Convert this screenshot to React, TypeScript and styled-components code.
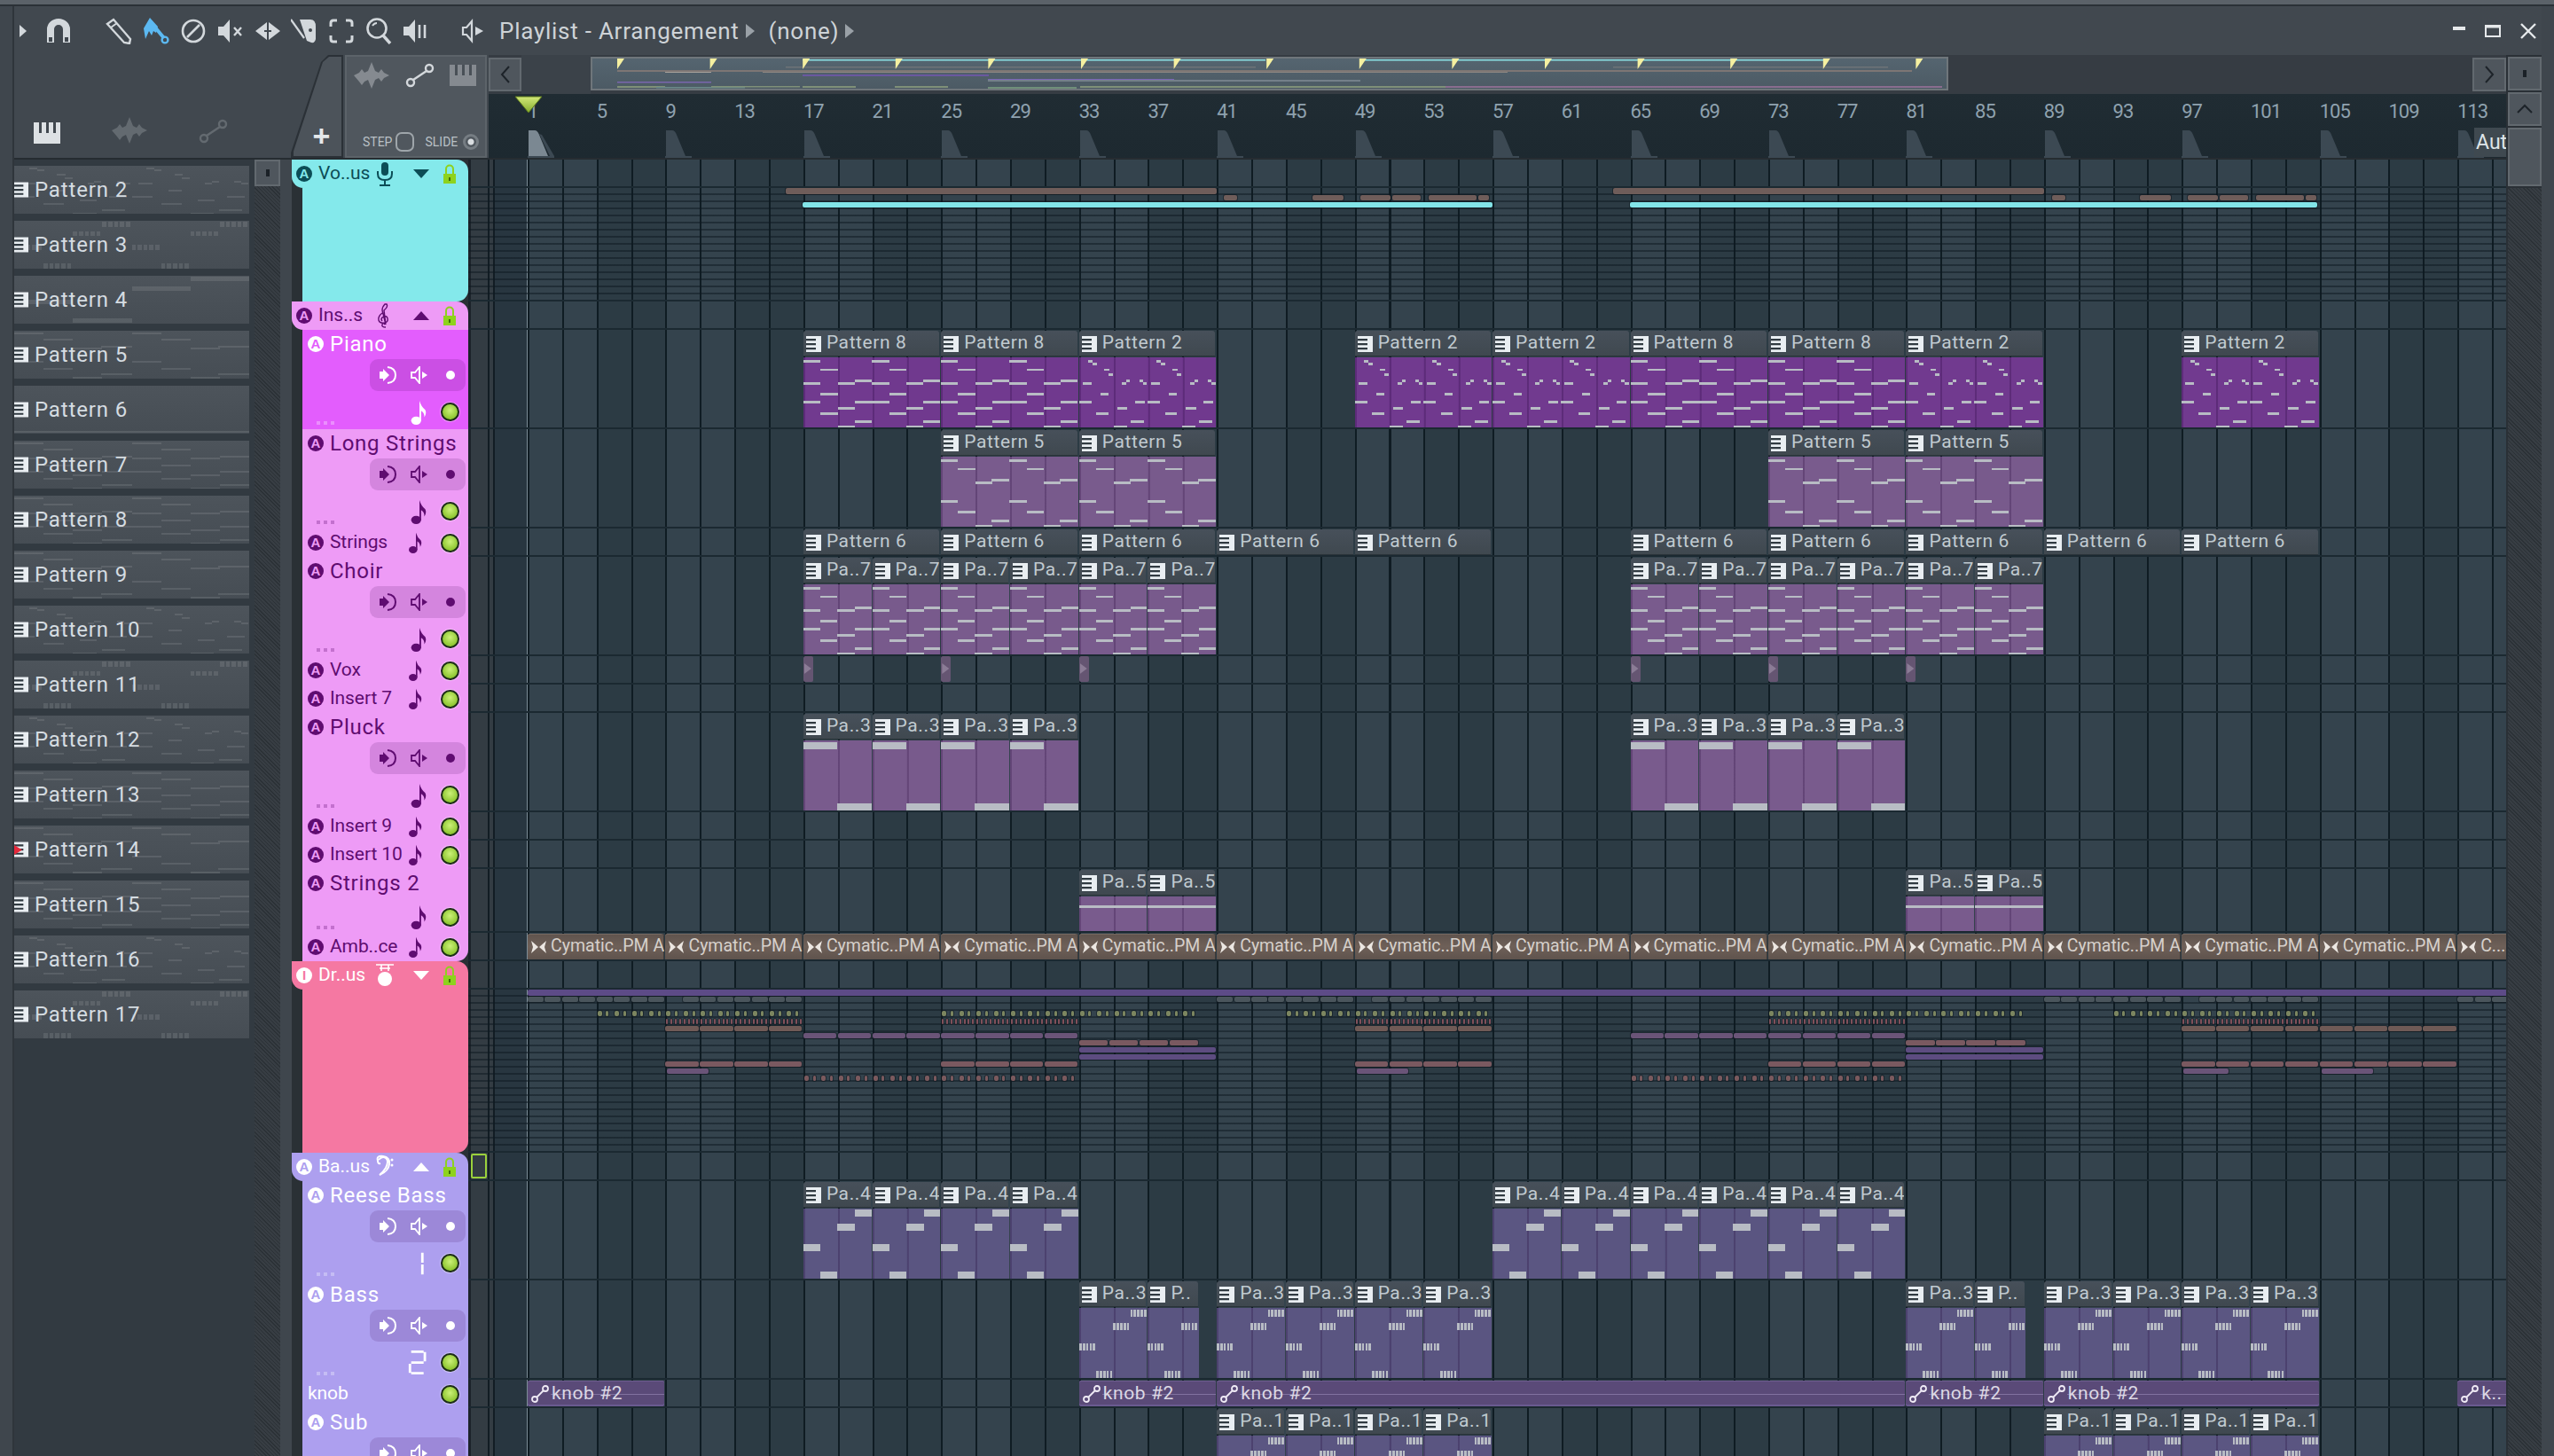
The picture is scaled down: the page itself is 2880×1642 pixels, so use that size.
import React from "react";
import { styled, createGlobalStyle } from "styled-components";

const FONT = `Roboto, "Noto Sans", "Liberation Sans", sans-serif`;
const BAR = 19.43;

const GlobalStyle = createGlobalStyle`
  html, body { margin: 0; padding: 0; background: #3e454c; }
  * { box-sizing: border-box; }
`;

const Screen = styled.div`
  width: 2880px;
  height: 1642px;
  overflow: hidden;
  display: flex;
  flex-direction: column;
  font-family: ${FONT};
  background: #3e454c;
`;
const TopStrip = styled.div`
  height: 7px;
  flex: none;
  background: #5b6269;
  border-bottom: 2px solid #2b3137;
`;
const WindowBody = styled.div`
  flex: 1;
  display: flex;
  min-height: 0;
`;
const EdgeLeft = styled.div`
  width: 16px;
  flex: none;
  background: #3f464d;
  border-right: 2px solid #2f353b;
`;
const EdgeRight = styled.div`
  width: 14px;
  flex: none;
  background: #3f464d;
`;
const Main = styled.div`
  flex: 1;
  display: flex;
  flex-direction: column;
  min-width: 0;
`;

/* title bar */
const TitleBar = styled.div`
  height: 55px;
  flex: none;
  display: flex;
  align-items: center;
  padding-left: 6px;
  padding-right: 6px;
  background: #41484f;
  color: #d3d8dc;
`;
const ToolIcon = styled.svg`
  width: 30px;
  height: 30px;
  flex: none;
  display: block;
`;
const ToolGroup = styled.div`
  display: flex;
  gap: 11.875px;
  margin-left: 38px;
`;
const Caption = styled.span`
  font-size: 26px;
  letter-spacing: 0.75px;
  color: #ced3d7;
  white-space: nowrap;
`;
const CaptionArrow = styled.svg`
  width: 10px;
  height: 16px;
  flex: none;
  margin: 0 16px 0 7px;
`;
const WindowButtons = styled.div`
  margin-left: auto;
  display: flex;
  align-items: center;
  gap: 22px;
`;

/* content */
const Content = styled.div`
  flex: 1;
  display: flex;
  min-height: 0;
`;
const PickerColumn = styled.div`
  width: 300px;
  flex: none;
  display: flex;
  flex-direction: column;
`;
const PickerHeader = styled.div`
  height: 116px;
  flex: none;
  display: flex;
  align-items: flex-end;
  background: #41484f;
  padding: 0 0 16px 22px;
  gap: 58px;
  color: #dde1e4;
`;
const FaintIcon = styled.svg<{ $w: number; $h: number; $o?: number }>`
  width: ${(p) => p.$w}px;
  height: ${(p) => p.$h}px;
  flex: none;
  opacity: ${(p) => p.$o ?? 1};
`;
const PickerBody = styled.div`
  flex: 1;
  display: flex;
  border-top: 2px solid #262c31;
  min-height: 0;
`;
const PatternList = styled.div`
  width: 271px;
  flex: none;
  padding-top: 7px;
  display: flex;
  flex-direction: column;
  gap: 8px;
  background: #323a41;
`;
const PatternRow = styled.div`
  position: relative;
  width: 265px;
  height: 54px;
  flex: none;
  display: flex;
  align-items: center;
  gap: 7px;
  background: linear-gradient(180deg, #4d545b, #464d54);
  overflow: hidden;
`;
const PatternPreview = styled.svg`
  position: absolute;
  inset: 0;
  width: 100%;
  height: 100%;
`;
const PatternIcon = styled.svg`
  width: 16px;
  height: 18px;
  flex: none;
  position: relative;
`;
const PatternName = styled.span`
  position: relative;
  font-size: 24px;
  letter-spacing: 0.85px;
  color: #d5dce1;
  white-space: nowrap;
`;
const RedMark = styled.i`
  position: absolute;
  left: 0;
  top: 22px;
  width: 9px;
  height: 11px;
  background: #e5293c;
  clip-path: polygon(0 0, 100% 50%, 0 100%);
`;
const Hatch = styled.div`
  flex: 1;
  background: repeating-linear-gradient(45deg, #2b3136 0 1px, #373d43 1px 3px);
`;
const PickerScroll = styled.div`
  width: 29px;
  flex: none;
  display: flex;
  flex-direction: column;
  background: #2c3238;
`;
const SquareButton = styled.div<{ $h?: number; $w?: number }>`
  width: ${(p) => (p.$w ? `${p.$w}px` : "100%")};
  height: ${(p) => p.$h ?? 38}px;
  flex: none;
  display: flex;
  align-items: center;
  justify-content: center;
  background: #4f565d;
  border: 2px solid #62696f;
  color: #1d2329;
`;
const TinyBar = styled.i`
  display: block;
  width: 4px;
  height: 8px;
  background: #1b2127;
`;

const PlaylistColumn = styled.div`
  flex: 1;
  min-width: 0;
  display: flex;
`;
const PlaylistCenter = styled.div`
  width: 2510px;
  flex: none;
  display: flex;
  flex-direction: column;
`;
const ScrollColumn = styled.div`
  width: 40px;
  flex: none;
  display: flex;
  flex-direction: column;
  gap: 2px;
  padding: 2px 0 0 2px;
  background: #2a3036;
`;

/* toolbar above the tracks */
const Toolbar = styled.div`
  height: 116px;
  flex: none;
  display: flex;
  background: #41484f;
  padding-left: 12px;
`;
const SlantTab = styled.div`
  position: relative;
  width: 59px;
  flex: none;
  background: #2b3137;
  clip-path: polygon(0 100%, 0 95%, 34px 8px, 42px 0, 100% 0, 100% 100%);
  color: #e4e8ea;
  display: flex;
  align-items: flex-end;
  justify-content: center;
  padding: 0 0 12px 10px;
  font-size: 34px;
  line-height: 26px;
  font-weight: 700;
  font-family: "Liberation Sans", sans-serif;
  &::before {
    content: "";
    position: absolute;
    inset: 2px 2px 2px 3px;
    background: #4c535a;
    clip-path: polygon(0 100%, 0 95%, 33px 6px, 40px 0, 100% 0, 100% 100%);
  }
  span {
    position: relative;
  }
`;
const ModePanel = styled.div`
  width: 160px;
  margin-left: 2px;
  flex: none;
  display: flex;
  flex-direction: column;
  justify-content: space-between;
  background: #50575e;
  border: 2px solid #5c6369;
  padding: 6px 10px 5px 8px;
`;
const ModeIcons = styled.div`
  display: flex;
  align-items: center;
  justify-content: space-between;
  color: #d4d8dc;
`;
const ModeSwitches = styled.div`
  display: flex;
  align-items: center;
  color: #b9c0c5;
  font-size: 14px;
  white-space: nowrap;
  padding-left: 10px;
`;
const StepBox = styled.i`
  width: 21px;
  height: 22px;
  flex: none;
  margin: 0 12px 0 4px;
  border: 2px solid #9ea5aa;
  border-radius: 7px;
`;
const SlideDot = styled.i`
  width: 18px;
  height: 18px;
  flex: none;
  margin-left: 6px;
  border-radius: 50%;
  border: 3px solid #767d83;
  background: radial-gradient(circle, #d9dde0 0 3px, #50575e 4px);
`;
const TimeColumn = styled.div`
  flex: 1;
  min-width: 0;
  margin-left: 2px;
  display: flex;
  flex-direction: column;
`;
const OverviewRow = styled.div`
  height: 44px;
  flex: none;
  display: flex;
  align-items: center;
  background: #363c43;
`;
const ArrowGlyph = styled.svg`
  width: 14px;
  height: 22px;
`;
const OverviewTrack = styled.div`
  flex: 1;
  align-self: stretch;
  padding: 2px 0 4px 78px;
  background: linear-gradient(90deg, #3b4249 0 78px, transparent 78px);
`;
const OverviewMini = styled.svg`
  display: block;
  width: 1531px;
  height: 38px;
`;
const Ruler = styled.div`
  position: relative;
  flex: 1;
  padding-left: 44px;
  background: linear-gradient(180deg, #202c33, #1d2930);
  overflow: hidden;
`;
const RulerNumbers = styled.div`
  height: 39px;
  display: flex;
  align-items: center;
`;
const RulerNumber = styled.span`
  width: 77.72px;
  flex: none;
  font-size: 22px;
  letter-spacing: -1px;
  color: #8fa2af;
`;
const RulerMarkers = styled.div`
  height: 33px;
  display: flex;
`;
const RulerMarker = styled.div`
  width: 155.44px;
  flex: none;
`;
const MarkerShape = styled.svg`
  display: block;
  width: 38px;
  height: 33px;
`;
const Playhead = styled.svg`
  position: absolute;
  left: 29px;
  top: 2px;
  width: 32px;
  height: 19px;
`;
const AutoButton = styled.div`
  position: absolute;
  right: 0;
  bottom: 1px;
  width: 36px;
  height: 33px;
  padding-left: 2px;
  overflow: hidden;
  background: #3f4950;
  color: #dfe5e9;
  font-size: 23px;
  line-height: 33px;
  white-space: nowrap;
`;

/* tracks */
const TrackArea = styled.div`
  flex: 1;
  display: flex;
  min-height: 0;
  border-top: 2px solid #262c31;
  overflow: hidden;
`;
const LabelColumn = styled.div`
  width: 212px;
  flex: none;
  display: flex;
  flex-direction: column;
  background: linear-gradient(90deg, #3f464d 0 13px, #2a3035 13px 25px, #2a3035 25px);
`;
const LanesColumn = styled.div`
  flex: 1;
  min-width: 0;
  display: flex;
  flex-direction: column;
`;

const GroupHeader = styled.div<{ $bg: string; $ink: string }>`
  height: 32px;
  flex: none;
  margin-left: 13px;
  padding-left: 5px;
  display: grid;
  grid-template-columns: 25px 62px 26px 47px 27px;
  align-items: center;
  background: ${(p) => p.$bg};
  color: ${(p) => p.$ink};
  border-radius: 0 13px 0 13px;
`;
const GroupBody = styled.div<{ $bg: string; $h: number }>`
  height: ${(p) => p.$h}px;
  flex: none;
  margin-left: 25px;
  background: ${(p) => p.$bg};
  border-radius: 0 0 13px 0;
`;
const HeaderName = styled.span`
  font-size: 21px;
  padding-bottom: 2px;
  white-space: nowrap;
`;
const HeaderTriangle = styled.svg`
  width: 18px;
  height: 10px;
  justify-self: end;
  margin-right: 10px;
`;
const LockIcon = styled.svg`
  width: 14px;
  height: 22px;
  justify-self: start;
  margin-left: 6px;
`;
const GlyphCell = styled.svg`
  width: 22px;
  height: 28px;
  justify-self: center;
`;
const Badge = styled.span<{ $fg: string; $bg: string }>`
  width: 18px;
  height: 18px;
  flex: none;
  border-radius: 50%;
  background: ${(p) => p.$bg};
  color: ${(p) => p.$fg};
  font-size: 15px;
  line-height: 18px;
  font-weight: 700;
  text-align: center;
  font-family: "Liberation Sans", sans-serif;
`;

const TrackLabel = styled.div<{ $bg: string; $ink: string; $h: number; $last?: boolean }>`
  height: ${(p) => p.$h}px;
  flex: none;
  margin-left: 25px;
  padding: 0 0 0 6px;
  display: flex;
  flex-direction: column;
  background: ${(p) => p.$bg};
  color: ${(p) => p.$ink};
  border-radius: ${(p) => (p.$last ? "0 0 13px 0" : "0")};
`;
const NameRow = styled.div`
  height: 32px;
  flex: none;
  display: flex;
  align-items: center;
  gap: 7px;
`;
const TrackName = styled.span`
  flex: 1;
  min-width: 0;
  font-size: 24px;
  letter-spacing: 0.75px;
  white-space: nowrap;
`;
const SmallName = styled(TrackName)`
  font-size: 21px;
  letter-spacing: -0.1px;
  padding-bottom: 2px;
`;
const ButtonBox = styled.div`
  width: 108px;
  height: 36px;
  flex: none;
  margin: 1px 3px 0 auto;
  display: flex;
  align-items: center;
  justify-content: space-around;
  padding: 0 0 0 4px;
  background: rgba(60, 0, 80, 0.14);
  border-radius: 9px;
`;
const BoxIcon = styled.svg`
  width: 20px;
  height: 20px;
  flex: none;
`;
const BottomRow = styled.div`
  flex: 1;
  display: flex;
  align-items: center;
  padding-top: 4px;
`;
const Dots = styled.div<{ $ink: string }>`
  margin: 24px auto 0 10px;
  display: flex;
  gap: 4px;
  i {
    width: 4px;
    height: 4px;
    background: ${(p) => p.$ink};
    opacity: 0.3;
  }
`;
const NoteCell = styled.svg<{ $small?: boolean }>`
  width: 26px;
  height: ${(p) => (p.$small ? 24 : 28)}px;
  flex: none;
  margin-right: ${(p) => (p.$small ? 8 : 11)}px;
`;
const Led = styled.i`
  width: 21px;
  height: 21px;
  flex: none;
  margin-right: 10px;
  border-radius: 50%;
  border: 2px solid #1d2e18;
  background: radial-gradient(circle at 50% 40%, #cbf077, #8fc732 70%, #5f8f1a);
  box-shadow: 0 0 0 1px rgba(255, 255, 255, 0.35);
`;

const Lane = styled.div<{ $h: number }>`
  height: ${(p) => p.$h}px;
  flex: none;
  display: flex;
  border-bottom: 2px solid #1b2931;
`;
const denseLines = `
  repeating-linear-gradient(180deg, transparent 0 6px, rgba(13, 24, 32, 0.5) 6px 8px)
`;
const LaneGutter = styled.div<{ $dense?: boolean }>`
  position: relative;
  width: 67px;
  flex: none;
  background: ${(p) => (p.$dense ? `${denseLines},` : "")}
    linear-gradient(
      90deg,
      #1c232a 0 3px,
      #333c43 3px 22px,
      #121d24 22px 24px,
      #333c43 24px 28px,
      #121d24 28px 30px,
      #283640 30px 66px,
      #7c8c96 66px 67px
    );
`;
const LaneBody = styled.div<{ $dense?: boolean }>`
  position: relative;
  flex: 1;
  overflow: hidden;
  background: ${(p) => (p.$dense ? `${denseLines},` : "")}
    repeating-linear-gradient(90deg, #0f1c23 0 2px, transparent 2px 38.86px),
    repeating-linear-gradient(90deg, #34434d 0 77.72px, #2c3b44 77.72px 155.44px);
`;
const SelectionBox = styled.i`
  position: absolute;
  left: 3px;
  top: 1px;
  width: 18px;
  height: 28px;
  border: 2px solid #9ad13c;
  border-radius: 2px;
`;

const ClipFrame = styled.div`
  position: absolute;
  top: 1px;
  bottom: 0;
  display: flex;
  flex-direction: column;
  overflow: hidden;
`;
const ClipHead = styled.div`
  height: 29px;
  flex: none;
  display: flex;
  align-items: center;
  gap: 6px;
  padding-left: 3px;
  overflow: hidden;
  background: linear-gradient(180deg, #47505a 0, #3f484f 100%);
  border-radius: 3px 3px 0 0;
  margin-right: 1px;
  box-shadow: inset 0 -1px 0 #2a3339;
`;
const ClipIcon = styled.svg`
  width: 17px;
  height: 18px;
  flex: none;
`;
const ClipName = styled.span`
  font-size: 21px;
  letter-spacing: 0.6px;
  padding-bottom: 3px;
  color: #c0cad0;
  white-space: nowrap;
`;
const ClipBody = styled.div<{ $tone: string }>`
  flex: 1;
  margin-top: 1px;
  min-height: 0;
  background: repeating-linear-gradient(90deg, rgba(40, 10, 60, 0.22) 0 2px, transparent 2px 38.86px),
    ${(p) => p.$tone};
`;
const NoteArt = styled.svg`
  display: block;
  width: 100%;
  height: 100%;
`;
const AudioClip = styled.div`
  position: absolute;
  top: 1px;
  bottom: 0;
  display: flex;
  align-items: center;
  gap: 5px;
  padding-left: 4px;
  overflow: hidden;
  background: linear-gradient(180deg, #5f534d, #6e6058 50%, #5f534d);
  border-radius: 3px 3px 0 0;
  box-shadow: inset -1px 0 0 #3d3a39, inset 0 1px 0 #756860;
`;
const AudioName = styled.span`
  font-size: 19.5px;
  padding-bottom: 2px;
  color: #d6d0cb;
  white-space: nowrap;
`;
const AutoClip = styled(AudioClip)`
  background: #5a4a78;
  box-shadow: inset 0 1px 0 #6d5c8f, inset 0 -2px 0 #6a5a90;
  gap: 3px;
  border-radius: 2px;
`;
const AutoName = styled(AudioName)`
  position: relative;
  font-size: 21px;
  letter-spacing: 0.6px;
  color: #dcd8e4;
`;
const AutoLine = styled.i`
  position: absolute;
  left: 26px;
  right: 0;
  top: 15px;
  height: 1px;
  background: rgba(190, 175, 220, 0.4);
`;
const Mark = styled.i<{ $tone: string; $r?: number }>`
  position: absolute;
  background: ${(p) => p.$tone};
  border-radius: ${(p) => p.$r ?? 2}px;
  box-shadow: 0 0 0 1px rgba(12, 22, 30, 0.55);
`;
const VoxChip = styled.i`
  position: absolute;
  top: 0;
  width: 11px;
  height: 29px;
  border-radius: 2px;
  background: #655572;
  &::after {
    content: "";
    position: absolute;
    left: 1px;
    top: 8px;
    width: 8px;
    height: 12px;
    background: #8b7c96;
    clip-path: polygon(0 0, 100% 50%, 0 100%);
  }
`;

/* ---------- icons ---------- */
const SpeakerIcon = ({ open }: { open?: boolean }) =>
  open ? (
    <>
      <path d="M12 4v22l-6-7H2v-8h4z" fill="none" stroke="currentColor" strokeWidth="2.2" />
      <path d="M16 10l9 5-9 5z" fill="currentColor" />
    </>
  ) : (
    <path d="M1 10h6l7-8v26l-7-8H1z" fill="currentColor" />
  );

const Tools = () => (
  <ToolGroup>
    <ToolIcon viewBox="0 0 30 30">
      <path d="M2 7l7-5 19 22-1 5-6-1z" fill="none" stroke="currentColor" strokeWidth="2.4" />
      <path d="M6 11l7-5" stroke="currentColor" strokeWidth="2" />
    </ToolIcon>
    <ToolIcon viewBox="0 0 30 30" style={{ color: "#5cb9f2" }}>
      <path d="M8 0l9 10-2 7-3-2-2 5-3-5-4 9-2-12z" fill="currentColor" />
      <path d="M14 11l10 12" stroke="currentColor" strokeWidth="4" />
      <circle cx="25" cy="25" r="3.4" fill="none" stroke="currentColor" strokeWidth="2.4" />
    </ToolIcon>
    <ToolIcon viewBox="0 0 30 30">
      <circle cx="15" cy="15" r="12" fill="none" stroke="currentColor" strokeWidth="2.6" />
      <path d="M8 22L22 8" stroke="currentColor" strokeWidth="2.6" />
    </ToolIcon>
    <ToolIcon viewBox="0 0 30 30">
      <SpeakerIcon />
      <path d="M19 11l8 9M27 11l-8 9" stroke="currentColor" strokeWidth="2.4" />
    </ToolIcon>
    <ToolIcon viewBox="0 0 30 30">
      <path d="M14 5v20L1 15zM16 5v20l13-10z" fill="currentColor" />
      <path d="M11 15h8" stroke="#41484f" strokeWidth="2" />
    </ToolIcon>
    <ToolIcon viewBox="0 0 30 30">
      <path d="M0 2l15 21" stroke="currentColor" strokeWidth="2.2" />
      <path d="M10 2h12q6 0 6 8v14q-1 5-5 4l-5-2-8-24z" fill="currentColor" />
      <circle cx="22" cy="14" r="2" fill="#41484f" />
    </ToolIcon>
    <ToolIcon viewBox="0 0 30 30">
      <path
        d="M10 3H6Q3 3 3 6v4M20 3h4q3 0 3 3v4M3 20v4q0 3 3 3h4M27 20v4q0 3-3 3h-4"
        fill="none"
        stroke="currentColor"
        strokeWidth="3"
      />
    </ToolIcon>
    <ToolIcon viewBox="0 0 30 30">
      <circle cx="13" cy="12" r="10.5" fill="none" stroke="currentColor" strokeWidth="2.6" />
      <path d="M20 20l8 9" stroke="currentColor" strokeWidth="3.4" />
      <path d="M8 9q2-3 5-3" fill="none" stroke="currentColor" strokeWidth="2" />
    </ToolIcon>
    <ToolIcon viewBox="0 0 30 30">
      <SpeakerIcon />
      <path d="M19 8v15M25 8v15" stroke="currentColor" strokeWidth="2.6" />
    </ToolIcon>
  </ToolGroup>
);

const Magnet = () => (
  <ToolIcon viewBox="0 0 30 30" style={{ marginLeft: 21 }}>
    <path d="M2 28V13a13 12 0 0 1 26 0v15h-8V13a5 5 0 0 0-10 0v15z" fill="currentColor" />
    <path d="M4 22h4v5H4zM22 22h4v5h-4z" fill="#41484f" />
  </ToolIcon>
);

const PianoGlyph = ({ w = 30, h = 24, o = 1 }: { w?: number; h?: number; o?: number }) => (
  <FaintIcon $w={w} $h={h} $o={o} viewBox="0 0 30 24">
    <path d="M0 0h30v24H0z" fill="currentColor" />
    <path d="M6 0h3v12H6zM14 0h3v12h-3zM22 0h3v12h-3z" fill="#41484f" />
  </FaintIcon>
);
const WaveGlyph = ({ o = 1 }: { o?: number }) => (
  <FaintIcon $w={40} $h={30} $o={o} viewBox="0 0 40 30">
    <path
      d="M0 15l6-3 3-4 3 4 4-2 4-10 4 10 4 2 3-4 3 4 6 3-6 3-3 4-3-4-4 2-4 10-4-10-4 2-3 4-3-4z"
      fill="currentColor"
    />
  </FaintIcon>
);
const AutoGlyph = ({ o = 1 }: { o?: number }) => (
  <FaintIcon $w={33} $h={28} $o={o} viewBox="0 0 33 28">
    <circle cx="6" cy="22" r="4" fill="none" stroke="currentColor" strokeWidth="2.4" />
    <circle cx="27" cy="6" r="4" fill="none" stroke="currentColor" strokeWidth="2.4" />
    <path d="M9 19L24 9" stroke="currentColor" strokeWidth="2.4" />
  </FaintIcon>
);

const KeysIcon = ({ as: Comp = ClipIcon }: { as?: typeof ClipIcon | typeof PatternIcon }) => (
  <Comp viewBox="0 0 17 18">
    <path d="M0 0h17v18H0z" fill="#e9eef2" />
    <path d="M0 3l11 0v2.2L0 5.2zM0 8l11 0v2.2L0 10.2zM0 13l11 0v2.2L0 15.2z" fill="#303a41" />
  </Comp>
);

const SendIcon = () => (
  <BoxIcon viewBox="0 0 20 20">
    <path d="M0 6h4V3l7 7-7 7v-3H0z" fill="currentColor" />
    <path d="M9 1q9 1 9 9t-9 9" fill="none" stroke="currentColor" strokeWidth="2" />
  </BoxIcon>
);
const OutlineSpeaker = () => (
  <BoxIcon viewBox="0 0 20 20">
    <path d="M10 1v18l-5-6H1V7h4z" fill="none" stroke="currentColor" strokeWidth="1.8" />
    <path d="M13 6l6 4-6 4z" fill="currentColor" />
  </BoxIcon>
);
const DotIcon = () => (
  <BoxIcon viewBox="0 0 20 20">
    <circle cx="10" cy="10" r="5" fill="currentColor" />
  </BoxIcon>
);
const Note = ({ small }: { small?: boolean }) => (
  <NoteCell $small={small} viewBox="0 0 26 30">
    <ellipse cx="9" cy="25" rx="6" ry="5" fill="currentColor" />
    <path d="M13 25V1q2 7 7 11 2 4-1 9 0-6-4-8v12z" fill="currentColor" />
  </NoteCell>
);
const DigitOne = () => (
  <NoteCell viewBox="0 0 26 30">
    <path d="M15 2h3v12h-3zM15 16h3v12h-3z" fill="currentColor" />
  </NoteCell>
);
const DigitTwo = () => (
  <NoteCell viewBox="0 0 26 30">
    <path d="M3 0h15v3H3zM18 2h3v11h-3zM3 13h15v3H3zM0 16h3v11H0zM3 26h15v3H3z" fill="currentColor" />
  </NoteCell>
);

const GroupGlyph = ({ kind }: { kind: string }) => {
  if (kind === "mic")
    return (
      <GlyphCell viewBox="0 0 22 28">
        <rect x="7" y="1" width="8" height="15" rx="4" fill="currentColor" />
        <path d="M3 11v3q0 7 8 7t8-7v-3M11 21v5M5 27h12" fill="none" stroke="currentColor" strokeWidth="2" />
      </GlyphCell>
    );
  if (kind === "treble")
    return (
      <GlyphCell viewBox="0 0 22 28">
        <path
          d="M12 27q-5 0-4-3t3 0M11 1q-3 3-3 7l4 16-2-16q5-4 3-7zM8 11q-5 4-4 8t7 3q4-1 3-5t-6-1q-2 2 0 4"
          fill="none"
          stroke="currentColor"
          strokeWidth="1.4"
        />
      </GlyphCell>
    );
  if (kind === "drum")
    return (
      <GlyphCell viewBox="0 0 22 28">
        <path d="M1 2h20M5 6h12M7 2v7M15 2v7" stroke="currentColor" strokeWidth="1.6" />
        <circle cx="11" cy="18" r="8" fill="currentColor" />
      </GlyphCell>
    );
  return (
    <GlyphCell viewBox="0 0 22 28">
      <path d="M4 6q4-5 8-2t0 11q-3 5-7 8 10-4 11-12T9 2 3 7q0 4 3 3" fill="none" stroke="currentColor" strokeWidth="2" />
      <circle cx="19" cy="6" r="1.5" fill="currentColor" />
      <circle cx="19" cy="12" r="1.5" fill="currentColor" />
    </GlyphCell>
  );
};
const Lock = () => (
  <LockIcon viewBox="0 0 14 22">
    <path d="M3 11V5.5a4 4 0 0 1 8 0V11" fill="none" stroke="#8ed21d" strokeWidth="2" />
    <rect x="0" y="11" width="14" height="11" fill="#8ed21d" />
    <rect x="6" y="15" width="2" height="4" fill="#3e6f08" />
  </LockIcon>
);
const Triangle = ({ up }: { up?: boolean }) => (
  <HeaderTriangle viewBox="0 0 18 10">
    <path d={up ? "M9 0l9 10H0z" : "M0 0h18L9 10z"} fill="currentColor" />
  </HeaderTriangle>
);

/* ---------- note data ---------- */
type N = [number, number, number, number?];
const tile = (notes: N[], span: number, times: number): N[] =>
  Array.from({ length: times }).flatMap((_, t) =>
    notes.map(([x, y, w, h]): N => [x + t * span, y, w, h]),
  );
const chords: N[] = [
  [0, 10, 1],
  [0, 84, 1],
  [0, 150, 1],
  [1, 38, 1],
  [1, 122, 1],
  [1, 188, 1],
  [2, 84, 1],
  [2, 169, 1],
  [2, 234, 1],
  [3, 75, 1],
  [3, 150, 1],
  [3, 216, 1],
];
const keys: N[] = [
  [0.5, 10, 0.28],
  [0.78, 19, 0.24],
  [1.46, 38, 0.28],
  [1.72, 56, 0.26],
  [0.22, 84, 0.5],
  [2.5, 84, 0.22],
  [2.72, 75, 0.24],
  [3.5, 75, 0.24],
  [3.74, 84, 0.22],
  [1.24, 122, 0.48],
  [0, 150, 0.7],
  [3.24, 150, 0.6],
  [2.24, 169, 0.58],
  [1, 188, 0.7],
  [2.98, 216, 0.78],
  [2, 234, 0.8],
];
const longNotes: N[] = [
  [0, 10, 1],
  [0, 150, 1],
  [1, 38, 1],
  [1, 186, 1],
  [2, 84, 1],
  [2, 233, 1],
  [2.95, 75, 1.05],
  [2.95, 215, 1.05],
];
const pluck: N[] = [
  [0, 5, 2, 24],
  [2, 215, 2, 24],
];
const reese: N[] = [
  [3, 4, 1, 24],
  [2, 52, 1, 24],
  [0, 122, 1, 24],
  [1, 215, 1, 24],
];
const ticks: N[] = [
  [3, 5],
  [2, 52],
  [0, 122],
  [1, 215],
].flatMap(([b, y]) => [0, 0.2, 0.4, 0.6, 0.8].map((o): N => [b + o, y, 0.14, 24]));
const stringLine: N[] = [[0, 64, 4, 18]];

const NoteGraphic = ({ bars, notes, color }: { bars: number; notes: N[]; color: string }) => (
  <NoteArt viewBox={`0 0 ${bars} 240`} preserveAspectRatio="none" shapeRendering="crispEdges">
    {notes
      .filter((n) => n[0] < bars)
      .map(([x, y, w, h], i) => (
        <rect key={i} x={x} y={y} width={w} height={h ?? 9} fill={color} />
      ))}
  </NoteArt>
);

/* ---------- track data ---------- */
const PURPLE = "rgba(122, 57, 152, 0.88)";
const MUTED = "rgba(131, 94, 150, 0.88)";
const NAVY = "rgba(97, 89, 138, 0.88)";
const NOTE = "#b8bcc4";

type ClipDef = { bar: number; len: number; label: string; notes?: N[]; tone?: string };
type MarkDef = { x: number; y: number; w: number; h: number; tone: string };
type Row = {
  kind: "group" | "big" | "mid" | "small" | "knob";
  name: string;
  h: number;
  bg: string;
  ink: string;
  badgeFg?: string;
  off?: boolean;
  glyph?: string;
  up?: boolean;
  dense?: number;
  digit?: 1 | 2;
  clips?: ClipDef[];
  audio?: boolean;
  auto?: boolean;
  marks?: MarkDef[];
  chips?: number[];
  select?: boolean;
};

const barPx = (b: number) => (b - 1) * BAR;
const starts = (from: number, n: number, step: number) =>
  Array.from({ length: n }, (_, i) => from + i * step);
const clipsOf = (bars: number[], len: number, label: string, notes?: N[], tone?: string): ClipDef[] =>
  bars.map((bar) => ({ bar, len, label, notes, tone }));

const RUST = "#6f5a56";
const ROSE = "#7a5960";
const PLUM = "#5d4c80";
const MAUVE = "#6a5478";

const span = (a: number, b: number, y: number, tone: string, step = 2, h = 6): MarkDef[] =>
  starts(a, Math.round((b - a) / step), step).map((s) => ({
    x: barPx(s),
    y,
    w: step * BAR - 1.5,
    h,
    tone,
  }));
const dots = (a: number, b: number, y: number, tone: string, w: number, step: number, h = 6): MarkDef[] =>
  starts(a, Math.round((b - a) / step), step).map((s, i) => ({
    x: barPx(s) + 1,
    y,
    w: step > 0.4 && i % 2 ? 3 : w,
    h,
    tone,
  }));

const vocalsMarks: MarkDef[] = [
  [886, 486, 0, 7],
  [1380, 15, 8, 6],
  [1480, 35, 8, 6],
  [1534, 34, 8, 6],
  [1570, 32, 8, 6],
  [1611, 54, 8, 6],
  [1667, 12, 8, 6],
  [1819, 486, 0, 7],
  [2314, 15, 8, 6],
  [2413, 35, 8, 6],
  [2467, 34, 8, 6],
  [2503, 32, 8, 6],
  [2544, 54, 8, 6],
  [2600, 12, 8, 6],
].map(([x, w, y, h]) => ({ x: x - 595, w, y, h, tone: "#6f5d5a" }));
vocalsMarks.push(
  { x: 905 - 595, w: 778, y: 16, h: 6, tone: "#82e4e8" },
  { x: 1838 - 595, w: 775, y: 16, h: 6, tone: "#82e4e8" },
);

const drumMarks: MarkDef[] = [
  { x: 0, y: 0, w: 2240, h: 7, tone: "#5d4b87" },
  ...[[1, 9], [10, 17], [41, 49], [50, 57], [89, 97], [98, 105], [113, 117]].flatMap(([a, b]) =>
    span(a, b, 8, "#4a555c", 1),
  ),
  ...[[5, 17], [25, 40], [45, 57], [73, 88], [93, 105]].flatMap(([a, b]) =>
    dots(a, b, 24, "#7c8660", 5, 0.5),
  ),
  ...[[9, 17], [25, 33], [49, 57], [73, 81], [97, 105]].flatMap(([a, b]) =>
    dots(a, b, 33, "#80505a", 2, 0.25),
  ),
  ...[[9, 17], [49, 57], [97, 113]].flatMap(([a, b]) => span(a, b, 41, RUST)),
  ...[[17, 33], [65, 81]].flatMap(([a, b]) => span(a, b, 49, MAUVE)),
  ...[[33, 40], [81, 88]].flatMap(([a, b]) => span(a, b, 57, ROSE, 1.75)),
  ...[[33, 41], [81, 89]].flatMap(([a, b]) => [
    { x: barPx(a), y: 65, w: (b - a) * BAR - 1, h: 6, tone: PLUM },
    { x: barPx(a), y: 73, w: (b - a) * BAR - 1, h: 6, tone: PLUM },
  ]),
  ...[[9, 17], [25, 33], [49, 57], [73, 81], [97, 113]].flatMap(([a, b]) => span(a, b, 81, ROSE)),
  ...[[9, 11.4], [49, 52], [97, 99.6], [105, 108]].map(([a, b]) => ({
    x: barPx(a) + 2,
    y: 89,
    w: (b - a) * BAR,
    h: 6,
    tone: MAUVE,
  })),
  ...[[17, 33], [65, 81]].flatMap(([a, b]) => dots(a, b, 97, "#7b5a5e", 5, 0.5)),
];

const VIOLET = "#ee9bf6";
const VIOLET_INK = "#5f0c70";
const MAGENTA = "#e35dfd";
const BLUE = "#ad9fef";

const rows: Row[] = [
  { kind: "group", name: "Vo..us", h: 32, bg: "#84e9eb", ink: "#0c4d56", badgeFg: "#84e9eb", glyph: "mic", dense: 128, marks: vocalsMarks },
  { kind: "group", name: "Ins..s", h: 32, bg: VIOLET, ink: VIOLET_INK, badgeFg: VIOLET, glyph: "treble", up: true },
  {
    kind: "big", name: "Piano", h: 112, bg: MAGENTA, ink: "#ffffff", badgeFg: MAGENTA,
    clips: [
      ...clipsOf([17, 25, 65, 73], 8, "Pattern 8", tile(chords, 4, 2), PURPLE),
      ...clipsOf([33, 49, 57, 81, 97], 8, "Pattern 2", tile(keys, 4, 2), PURPLE),
    ],
  },
  { kind: "big", name: "Long Strings", h: 112, bg: VIOLET, ink: VIOLET_INK, badgeFg: VIOLET, clips: clipsOf([25, 33, 73, 81], 8, "Pattern 5", tile(longNotes, 4, 2), MUTED) },
  { kind: "small", name: "Strings", h: 32, bg: VIOLET, ink: VIOLET_INK, badgeFg: VIOLET, clips: clipsOf([17, 25, 33, 41, 49, 65, 73, 81, 89, 97], 8, "Pattern 6") },
  { kind: "big", name: "Choir", h: 112, bg: VIOLET, ink: VIOLET_INK, badgeFg: VIOLET, clips: clipsOf([...starts(17, 6, 4), ...starts(65, 6, 4)], 4, "Pa..7", chords, MUTED) },
  { kind: "small", name: "Vox", h: 32, bg: VIOLET, ink: VIOLET_INK, badgeFg: VIOLET, chips: [17, 25, 33, 65, 73, 81] },
  { kind: "small", name: "Insert 7", h: 32, bg: VIOLET, ink: VIOLET_INK, badgeFg: VIOLET },
  { kind: "big", name: "Pluck", h: 112, bg: VIOLET, ink: VIOLET_INK, badgeFg: VIOLET, clips: clipsOf([...starts(17, 4, 4), ...starts(65, 4, 4)], 4, "Pa..3", pluck, MUTED) },
  { kind: "small", name: "Insert 9", h: 32, bg: VIOLET, ink: VIOLET_INK, badgeFg: VIOLET },
  { kind: "small", name: "Insert 10", h: 32, bg: VIOLET, ink: VIOLET_INK, badgeFg: VIOLET },
  { kind: "mid", name: "Strings 2", h: 72, bg: VIOLET, ink: VIOLET_INK, badgeFg: VIOLET, clips: clipsOf([33, 37, 81, 85], 4, "Pa..5", stringLine, MUTED) },
  { kind: "small", name: "Amb..ce", h: 32, bg: VIOLET, ink: VIOLET_INK, badgeFg: VIOLET, audio: true, clips: starts(1, 15, 8).map((bar) => ({ bar, len: 8, label: bar === 113 ? "C..." : "Cymatic..PM A" })) },
  { kind: "group", name: "Dr..us", h: 32, bg: "#f578a2", ink: "#ffffff", badgeFg: "#f578a2", off: true, glyph: "drum", dense: 184, marks: drumMarks },
  { kind: "group", name: "Ba..us", h: 32, bg: BLUE, ink: "#ffffff", badgeFg: BLUE, glyph: "bass", up: true, select: true },
  { kind: "big", name: "Reese Bass", h: 112, bg: BLUE, ink: "#ffffff", badgeFg: BLUE, digit: 1, clips: clipsOf([...starts(17, 4, 4), ...starts(57, 6, 4)], 4, "Pa..4", reese, NAVY) },
  {
    kind: "big", name: "Bass", h: 112, bg: BLUE, ink: "#ffffff", badgeFg: BLUE, digit: 2,
    clips: [
      ...clipsOf([33, 81], 4, "Pa..3", ticks, NAVY),
      ...clipsOf([37, 85], 3, "P..", ticks, NAVY),
      ...clipsOf([...starts(41, 4, 4), ...starts(89, 4, 4)], 4, "Pa..3", ticks, NAVY),
    ],
  },
  {
    kind: "knob", name: "knob", h: 32, bg: BLUE, ink: "#ffffff", auto: true,
    clips: [
      { bar: 1, len: 8, label: "knob #2" },
      { bar: 33, len: 8, label: "knob #2" },
      { bar: 41, len: 40, label: "knob #2" },
      { bar: 81, len: 8, label: "knob #2" },
      { bar: 89, len: 16, label: "knob #2" },
      { bar: 113, len: 4, label: "k.." },
    ],
  },
  { kind: "big", name: "Sub", h: 112, bg: BLUE, ink: "#ffffff", badgeFg: BLUE, clips: clipsOf([...starts(41, 4, 4), ...starts(89, 4, 4)], 4, "Pa..1", ticks, NAVY) },
];

const patternPreviews: Record<number, N[]> = {
  2: tile(keys, 4, 2),
  3: tile(ticks, 4, 2),
  4: reese.map(([x, y, w]): N => [x * 2, y, w * 2, 22]),
  5: tile(longNotes, 4, 2),
  6: [[0, 226, 8]],
  7: tile(chords, 4, 2),
  8: tile(chords, 4, 2),
  9: tile(longNotes, 4, 2),
  10: tile(keys, 4, 2),
  11: tile(ticks, 4, 2),
  12: tile(keys, 4, 2),
  13: tile(chords, 4, 2),
  14: tile(longNotes, 4, 2),
  15: tile(chords, 4, 2),
  16: tile(keys, 4, 2),
  17: tile(ticks, 4, 2),
};

const overviewLines: [number, number, number, number, string][] = [
  [905, 522, 3, 1.5, "#8be3e6"],
  [1534, 522, 3, 1.5, "#8be3e6"],
  [886, 530, 11, 1.5, "#6e7478"],
  [1819, 310, 11, 1.5, "#6e7478"],
  [696, 1460, 15, 2, "#7d7674"],
  [750, 52, 17, 1, "#a9a39c"],
  [860, 560, 17, 1, "#8d8782"],
  [1380, 320, 17, 1, "#8d8782"],
  [905, 210, 20, 2, "#6a58a0"],
  [1114, 210, 25, 2, "#7b66b8"],
  [696, 106, 28, 1.5, "#7a66ae"],
  [1114, 420, 26, 2, "#74808a"],
  [696, 54, 33, 2, "#7f9078"],
  [740, 100, 34, 1.5, "#6b8a8a"],
  [802, 100, 33, 1.5, "#7f9078"],
  [905, 60, 33, 2, "#7f9078"],
  [1009, 60, 33, 2, "#7f9078"],
  [1114, 100, 34, 2, "#6f8f7a"],
  [1218, 420, 33, 2, "#7f9078"],
  [1630, 560, 33, 2, "#8a6d8f"],
];

const Overview = () => (
  <OverviewMini viewBox="0 0 1531 38">
    <defs>
      <linearGradient id="ov" x1="0" y1="0" x2="0" y2="1">
        <stop offset="0" stopColor="#556570" />
        <stop offset="1" stopColor="#4c5a64" />
      </linearGradient>
    </defs>
    <rect x="1" y="1" width="1529" height="36" fill="url(#ov)" stroke="#6f767b" strokeWidth="2" />
    {overviewLines.map(([x, w, y, h, c], i) => (
      <rect key={i} x={x - 666} y={y} width={w} height={h} fill={c} />
    ))}
    {starts(0, 15, 1).map((i) => (
      <path key={i} d={`M${30 + i * 104.6} 2h8l-8 12z`} fill="#f5f0a0" />
    ))}
  </OverviewMini>
);

/* ---------- row rendering ---------- */
const LabelFor = ({ row, last }: { row: Row; last: boolean }) => {
  const badge = <Badge $bg={row.ink} $fg={row.badgeFg ?? row.bg}>{row.off ? "I" : "A"}</Badge>;
  if (row.kind === "group") {
    return (
      <>
        <GroupHeader $bg={row.bg} $ink={row.ink}>
          {badge}
          <HeaderName>{row.name}</HeaderName>
          <GroupGlyph kind={row.glyph ?? ""} />
          <Triangle up={row.up} />
          <Lock />
        </GroupHeader>
        {row.dense ? <GroupBody $bg={row.bg} $h={row.dense} /> : null}
      </>
    );
  }
  if (row.kind === "knob") {
    return (
      <TrackLabel $bg={row.bg} $ink={row.ink} $h={row.h}>
        <NameRow>
          <SmallName>{row.name}</SmallName>
          <Led />
        </NameRow>
      </TrackLabel>
    );
  }
  if (row.kind === "small") {
    return (
      <TrackLabel $bg={row.bg} $ink={row.ink} $h={row.h} $last={last}>
        <NameRow>
          {badge}
          <SmallName>{row.name}</SmallName>
          <Note small />
          <Led />
        </NameRow>
      </TrackLabel>
    );
  }
  return (
    <TrackLabel $bg={row.bg} $ink={row.ink} $h={row.h}>
      <NameRow>
        {badge}
        <TrackName>{row.name}</TrackName>
      </NameRow>
      {row.kind === "big" ? (
        <ButtonBox>
          <SendIcon />
          <OutlineSpeaker />
          <DotIcon />
        </ButtonBox>
      ) : null}
      <BottomRow>
        <Dots $ink={row.ink}>
          <i />
          <i />
          <i />
        </Dots>
        {row.digit === 1 ? <DigitOne /> : row.digit === 2 ? <DigitTwo /> : <Note />}
        <Led />
      </BottomRow>
    </TrackLabel>
  );
};

const ClipFor = ({ clip, row }: { clip: ClipDef; row: Row }) => {
  const pos = { left: barPx(clip.bar), width: clip.len * BAR - 1 };
  if (row.audio) {
    return (
      <AudioClip style={pos}>
        <svg width="17" height="14" viewBox="0 0 17 14" style={{ flex: "none" }}>
          <path d="M0 0l8 7-8 7 2-7zM17 0L9 7l8 7-2-7z" fill="#ebe6e1" />
        </svg>
        <AudioName>{clip.label}</AudioName>
      </AudioClip>
    );
  }
  if (row.auto) {
    return (
      <AutoClip style={pos}>
        <AutoLine />
        <svg width="20" height="20" viewBox="0 0 20 20" style={{ flex: "none", position: "relative" }}>
          <circle cx="4" cy="16" r="3" fill="none" stroke="#efeaf5" strokeWidth="1.8" />
          <circle cx="16" cy="4" r="3" fill="none" stroke="#efeaf5" strokeWidth="1.8" />
          <path d="M6 14L14 6" stroke="#efeaf5" strokeWidth="1.8" />
        </svg>
        <AutoName>{clip.label}</AutoName>
      </AutoClip>
    );
  }
  return (
    <ClipFrame style={pos}>
      <ClipHead>
        <KeysIcon />
        <ClipName>{clip.label}</ClipName>
      </ClipHead>
      {clip.notes ? (
        <ClipBody $tone={clip.tone ?? MUTED}>
          <NoteGraphic bars={clip.len} notes={clip.notes} color={NOTE} />
        </ClipBody>
      ) : null}
    </ClipFrame>
  );
};

const LanesFor = ({ row }: { row: Row }) => (
  <>
    <Lane $h={row.h}>
      <LaneGutter>{row.select ? <SelectionBox /> : null}</LaneGutter>
      <LaneBody>
        {row.clips?.map((c, i) => <ClipFor key={i} clip={c} row={row} />)}
        {row.chips?.map((b) => <VoxChip key={b} style={{ left: barPx(b) }} />)}
      </LaneBody>
    </Lane>
    {row.dense ? (
      <Lane $h={row.dense}>
        <LaneGutter $dense />
        <LaneBody $dense>
          {row.marks?.map((m, i) => (
            <Mark key={i} $tone={m.tone} style={{ left: m.x, top: m.y, width: m.w, height: m.h }} />
          ))}
        </LaneBody>
      </Lane>
    ) : null}
  </>
);

const rulerBars = starts(1, 29, 4);
const markerBars = starts(1, 15, 8);

export default function App() {
  return (
    <Screen>
      <GlobalStyle />
      <TopStrip />
      <WindowBody>
        <EdgeLeft />
        <Main>
          <TitleBar>
            <svg width="8" height="14" viewBox="0 0 8 14" style={{ flex: "none" }}>
              <path d="M0 0l8 7-8 7z" fill="#d3d8dc" />
            </svg>
            <Magnet />
            <Tools />
            <ToolIcon viewBox="0 0 30 30" style={{ marginLeft: 36 }}>
              <SpeakerIcon open />
            </ToolIcon>
            <Caption style={{ marginLeft: 13 }}>Playlist - Arrangement</Caption>
            <CaptionArrow viewBox="0 0 10 16">
              <path d="M0 0l10 8-10 8z" fill="#9aa1a7" />
            </CaptionArrow>
            <Caption>(none)</Caption>
            <CaptionArrow viewBox="0 0 10 16">
              <path d="M0 0l10 8-10 8z" fill="#9aa1a7" />
            </CaptionArrow>
            <WindowButtons>
              <svg width="14" height="14" viewBox="0 0 14 14">
                <path d="M0 2h14v4H0z" fill="#e6e9eb" />
              </svg>
              <svg width="18" height="14" viewBox="0 0 18 14">
                <path d="M1 1h16v12H1z" fill="none" stroke="#e6e9eb" strokeWidth="2" />
                <path d="M1 1h16v2H1z" fill="#e6e9eb" stroke="#e6e9eb" />
              </svg>
              <svg width="18" height="18" viewBox="0 0 18 18">
                <path d="M1 1l16 16M17 1L1 17" stroke="#e6e9eb" strokeWidth="2.4" />
              </svg>
            </WindowButtons>
          </TitleBar>
          <Content>
            <PickerColumn>
              <PickerHeader>
                <PianoGlyph />
                <WaveGlyph o={0.22} />
                <AutoGlyph o={0.22} />
              </PickerHeader>
              <PickerBody>
                <PatternList>
                  {starts(2, 16, 1).map((n) => (
                    <PatternRow key={n}>
                      <PatternPreview viewBox="0 0 8 240" preserveAspectRatio="none" shapeRendering="crispEdges">
                        {(patternPreviews[n] ?? []).map(([x, y, w, h], i) => (
                          <rect key={i} x={x} y={y} width={w} height={h ?? 9} fill="rgba(255,255,255,0.1)" />
                        ))}
                      </PatternPreview>
                      <KeysIcon as={PatternIcon} />
                      <PatternName>Pattern {n}</PatternName>
                      {n === 14 ? <RedMark /> : null}
                    </PatternRow>
                  ))}
                </PatternList>
                <PickerScroll>
                  <SquareButton $h={30}>
                    <TinyBar />
                  </SquareButton>
                  <Hatch />
                </PickerScroll>
              </PickerBody>
            </PickerColumn>
            <PlaylistColumn>
              <PlaylistCenter>
                <Toolbar>
                  <SlantTab>
                    <span>+</span>
                  </SlantTab>
                  <ModePanel>
                    <ModeIcons>
                      <WaveGlyph o={0.4} />
                      <AutoGlyph />
                      <PianoGlyph o={0.4} />
                    </ModeIcons>
                    <ModeSwitches>
                      STEP
                      <StepBox />
                      SLIDE
                      <SlideDot />
                    </ModeSwitches>
                  </ModePanel>
                  <TimeColumn>
                    <OverviewRow>
                      <SquareButton $w={37}>
                        <ArrowGlyph viewBox="0 0 14 22">
                          <path d="M11 2L3 11l8 9" fill="none" stroke="currentColor" strokeWidth="2" />
                        </ArrowGlyph>
                      </SquareButton>
                      <OverviewTrack>
                        <Overview />
                      </OverviewTrack>
                      <SquareButton $w={38}>
                        <ArrowGlyph viewBox="0 0 14 22">
                          <path d="M3 2l8 9-8 9" fill="none" stroke="currentColor" strokeWidth="2" />
                        </ArrowGlyph>
                      </SquareButton>
                    </OverviewRow>
                    <Ruler>
                      <RulerNumbers>
                        {rulerBars.map((b) => (
                          <RulerNumber key={b}>{b}</RulerNumber>
                        ))}
                      </RulerNumbers>
                      <RulerMarkers>
                        {markerBars.map((b) => (
                          <RulerMarker key={b}>
                            <MarkerShape viewBox="0 0 38 33">
                              <path d="M1 2h7q3 0 5 5l10 24H1z" fill={b === 1 ? "#7b8892" : "#3c4953"} />
                              {b === 1 ? <path d="M13 6l12 25h5L16 7z" fill="#3c4953" /> : null}
                              <path d="M0 31h30v2H0z" fill="#3c4953" />
                            </MarkerShape>
                          </RulerMarker>
                        ))}
                      </RulerMarkers>
                      <Playhead viewBox="0 0 32 19">
                        <defs>
                          <linearGradient id="ph" x1="0" y1="0" x2="0" y2="1">
                            <stop offset="0" stopColor="#d2e878" />
                            <stop offset="1" stopColor="#86ad2e" />
                          </linearGradient>
                        </defs>
                        <path d="M1 1h30L16 19z" fill="url(#ph)" stroke="#5d7a1c" strokeWidth="1" />
                      </Playhead>
                      <AutoButton>Auto</AutoButton>
                    </Ruler>
                  </TimeColumn>
                </Toolbar>
                <TrackArea>
                  <LabelColumn>
                    {rows.map((r, i) => (
                      <LabelFor key={r.name} row={r} last={rows[i + 1]?.kind === "group"} />
                    ))}
                  </LabelColumn>
                  <LanesColumn>
                    {rows.map((r) => (
                      <LanesFor key={r.name} row={r} />
                    ))}
                  </LanesColumn>
                </TrackArea>
              </PlaylistCenter>
              <ScrollColumn>
                <SquareButton>
                  <TinyBar />
                </SquareButton>
                <SquareButton>
                  <ArrowGlyph viewBox="0 0 22 14" style={{ width: 22, height: 14 }}>
                    <path d="M3 11l8-8 8 8" fill="none" stroke="currentColor" strokeWidth="2" />
                  </ArrowGlyph>
                </SquareButton>
                <SquareButton $h={66} />
                <Hatch />
              </ScrollColumn>
            </PlaylistColumn>
          </Content>
        </Main>
        <EdgeRight />
      </WindowBody>
    </Screen>
  );
}
